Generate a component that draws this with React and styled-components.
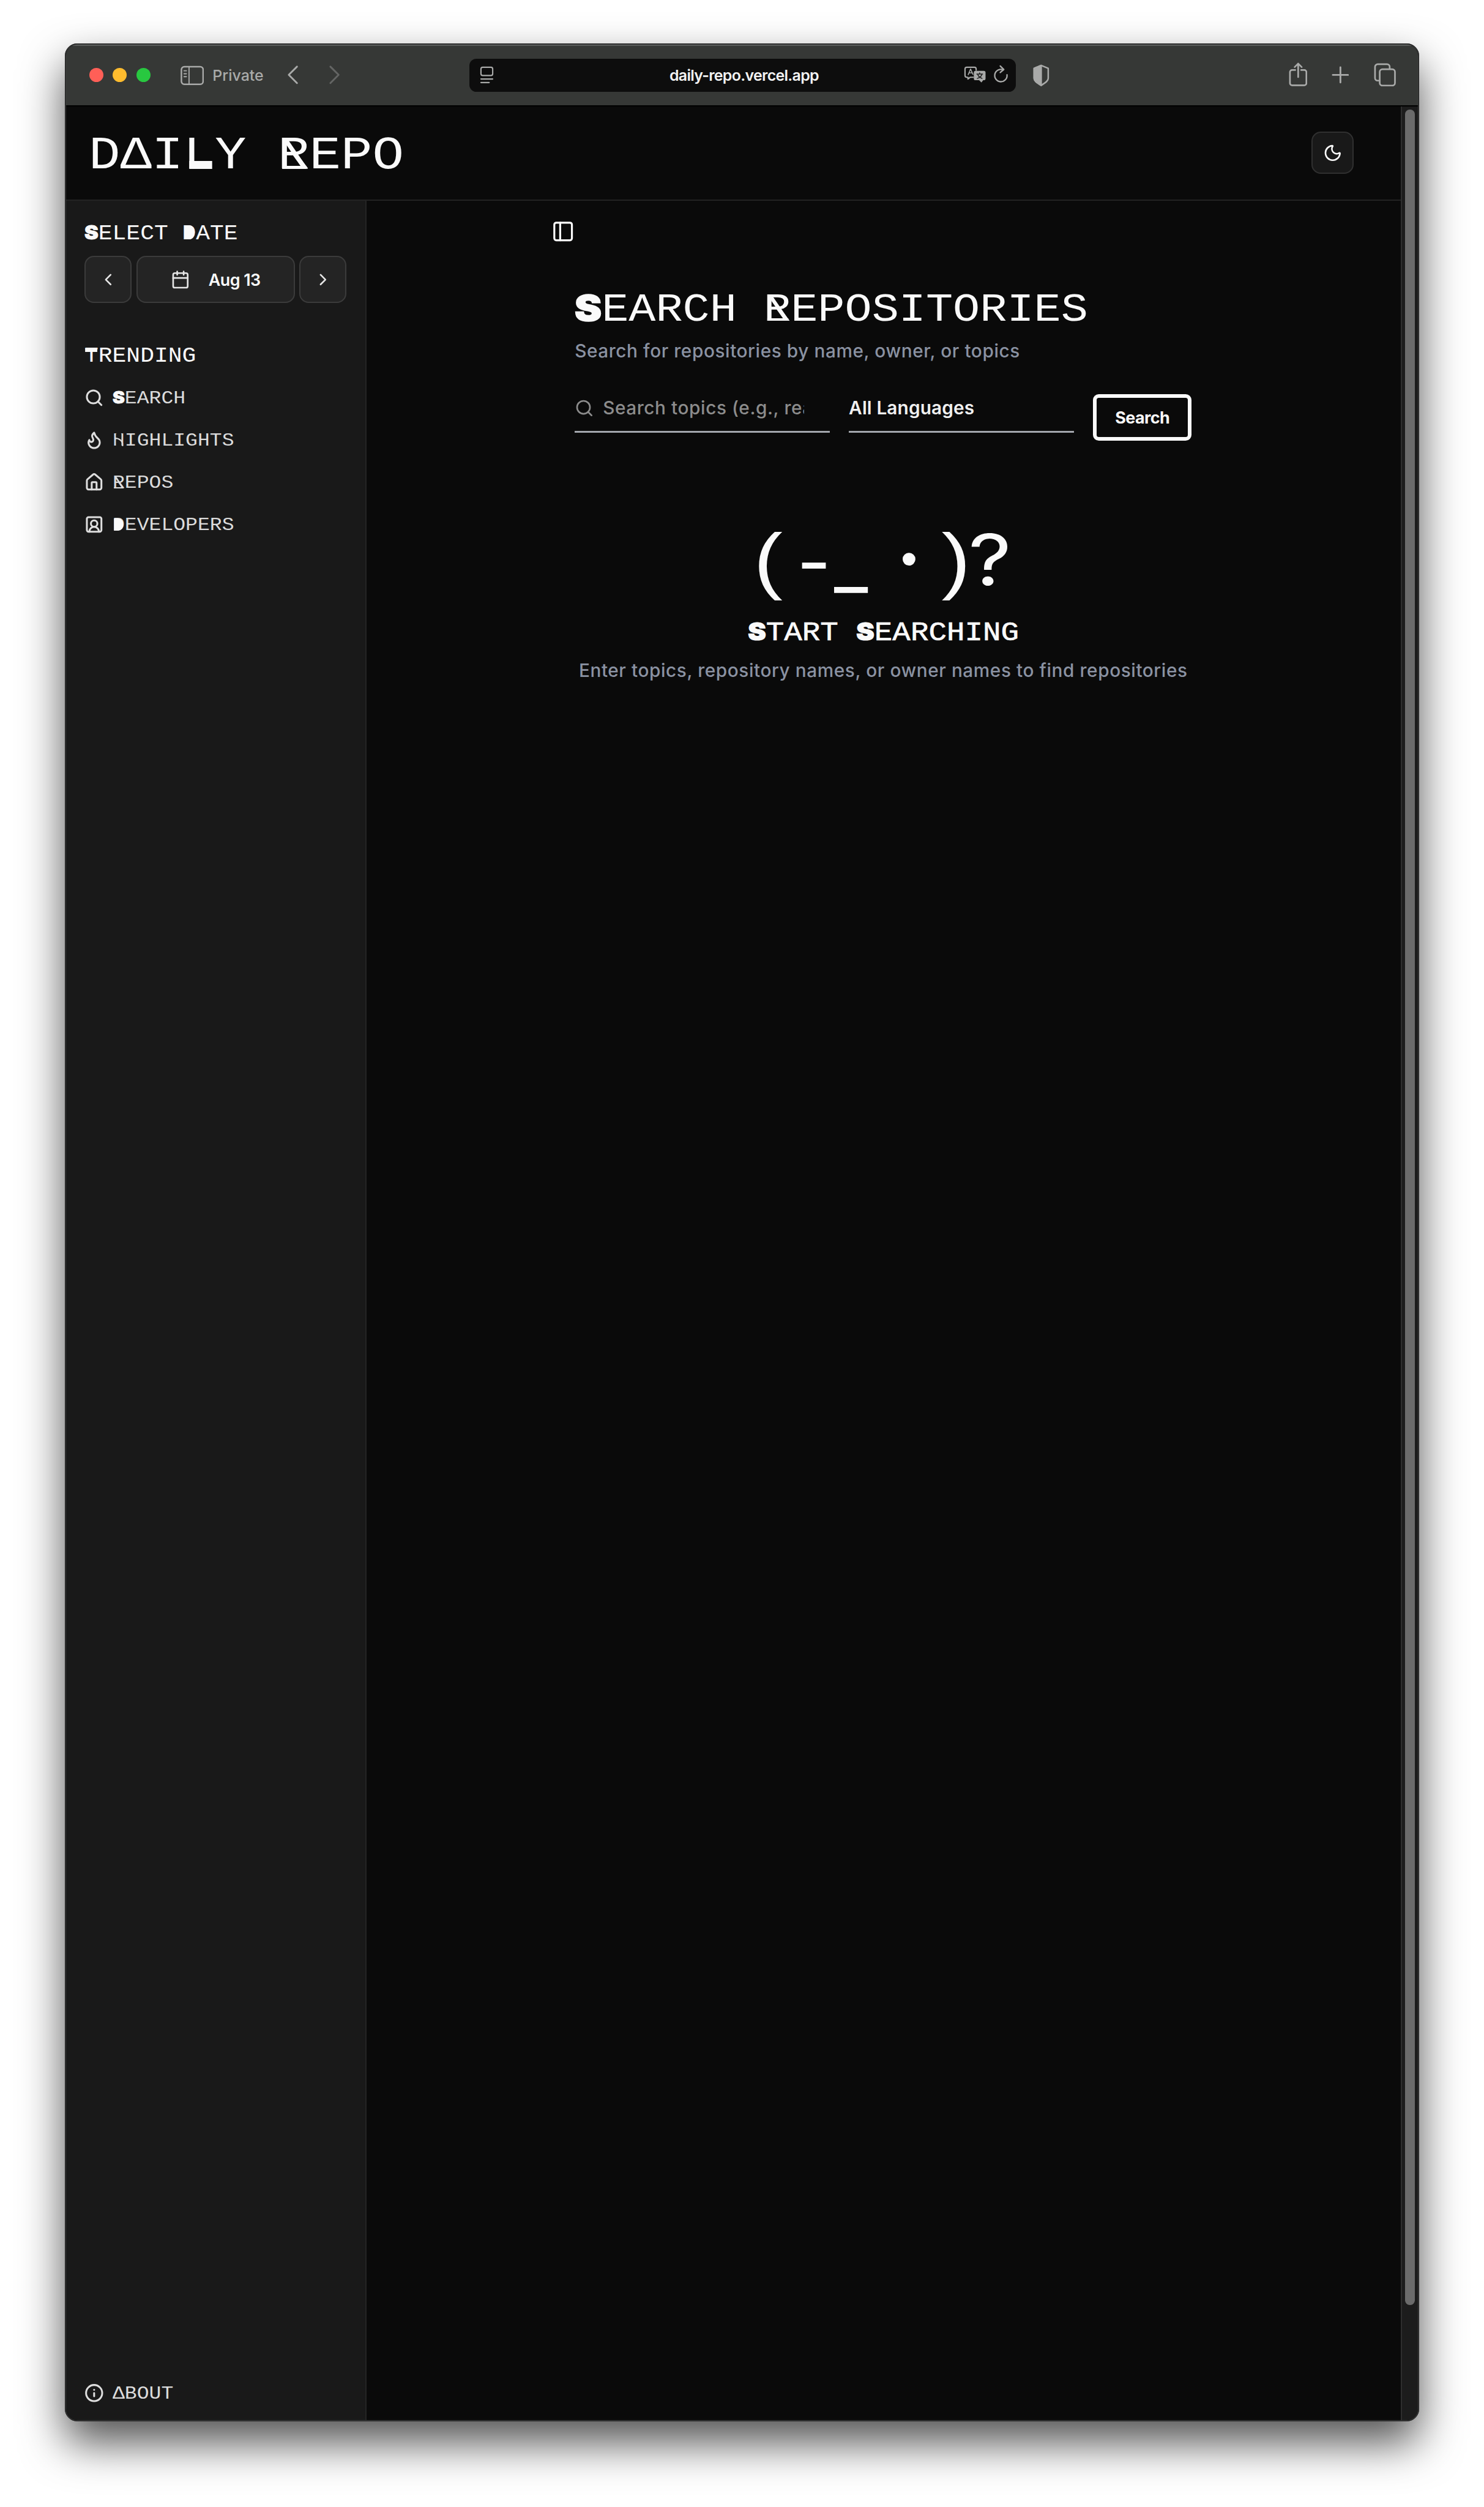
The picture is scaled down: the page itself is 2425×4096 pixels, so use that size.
import React from "react";
import styled, { createGlobalStyle, css } from "styled-components";
import {
  Moon, ChevronLeft, ChevronRight, Calendar, Search, Flame, House,
  SquareUserRound, Info, PanelLeft,
} from "lucide-react";

const SCALE = 0.95926;
const u = (n) => `${(n * SCALE).toFixed(2)}px`;
const sans = `Inter, "Noto Sans", sans-serif`;
const mono = `"Liberation Mono", monospace`;

const GlobalStyle = createGlobalStyle`
  *, *::before, *::after { box-sizing: border-box; }
  html, body { margin: 0; height: 100%; background: #fff; }
  body { font-family: ${sans}; color: #fafafa; overflow: hidden; }
  button, input { font: inherit; color: inherit; }
`;

const Desktop = styled.div`
  height: 100vh;
  padding: ${u(74)} ${u(110)} ${u(146)};
  background: #fff;
  overflow: hidden;
`;

const Window = styled.div`
  display: flex;
  flex-direction: column;
  height: 100%;
  overflow: hidden;
  border: 2px solid #3c3d3d;
  border-radius: ${u(21)};
  background: #0a0a0a;
  outline: 1px solid #1c1c1c;
  outline-offset: -1px;
  box-shadow: 0 ${u(36)} ${u(74)} rgba(0, 0, 0, 0.68);
`;

const Toolbar = styled.div`
  flex: none;
  display: flex;
  align-items: center;
  height: ${u(105)};
  padding-bottom: 1px;
  border-top: 2px solid #5a5c5b;
  border-bottom: 2px solid #000;
  background: #363836;
  color: #a9aaa9;
`;

const ToolbarStart = styled.div`
  display: flex;
  align-items: center;
  width: ${u(688)};
  padding-left: ${u(40)};
`;

const Lights = styled.div`
  display: flex;
  gap: ${u(16)};
`;

const Light = styled.span`
  width: ${u(24)};
  height: ${u(24)};
  border-radius: 50%;
  background: ${(p) => p.$color};
`;

const Glyph = styled.svg`
  flex: none;
  display: block;
  width: ${(p) => u(p.$w)};
  height: ${(p) => u(p.$h)};
  margin-left: ${(p) => u(p.$left || 0)};
  margin-top: ${(p) => u(p.$top || 0)};
  opacity: ${(p) => p.$opacity || 1};
  fill: none;
  stroke: currentColor;
  stroke-width: ${(p) => p.$stroke || 3};
  stroke-linecap: round;
  stroke-linejoin: round;
`;

const PrivateLabel = styled.span`
  width: ${u(90)};
  margin-left: ${u(15)};
  margin-top: ${u(2)};
  font-size: ${u(26)};
  font-weight: 500;
  line-height: 1;
  white-space: nowrap;
`;

const AddressBar = styled.div`
  display: flex;
  align-items: center;
  width: ${u(930)};
  height: ${u(56)};
  padding: 0 ${u(12)} 0 ${u(17)};
  border-radius: ${u(12)};
  background: #0d0d0d;
`;

const Address = styled.span`
  flex: 1;
  padding-left: ${u(52)};
  margin-top: ${u(1)};
  color: #f2f2f2;
  font-size: ${u(26)};
  font-weight: 600;
  letter-spacing: -0.028em;
  line-height: 1.3;
  text-align: center;
`;

const ToolbarEnd = styled.div`
  display: flex;
  align-items: center;
  margin-left: auto;
  padding-right: ${u(38)};
`;

const Viewport = styled.div`
  flex: 1;
  display: flex;
  min-height: 0;
`;

const Site = styled.div`
  flex: 1;
  display: flex;
  flex-direction: column;
  min-width: 0;
`;

const ScrollTrack = styled.div`
  flex: none;
  width: ${u(30)};
  padding: ${u(5)} ${u(6)};
  border-left: 2px solid #2e2e2e;
  background: #1c1c1c;
`;

const ScrollThumb = styled.div`
  width: ${u(16)};
  height: ${u(3740)};
  border-radius: ${u(8)};
  background: #6b6b6b;
`;

const SiteHeader = styled.header`
  flex: none;
  display: flex;
  align-items: center;
  justify-content: space-between;
  height: ${u(161)};
  padding: 0 ${u(80)} ${u(1)} ${u(39)};
  border-bottom: 2px solid #232323;
`;

const ThemeButton = styled.button`
  display: grid;
  place-items: center;
  width: ${u(72)};
  height: ${u(72)};
  padding: 0;
  border: 2px solid #303030;
  border-radius: ${u(16)};
  background: #191919;
  svg { width: ${u(33)}; height: ${u(33)}; }
`;

const Display = styled.div`
  height: ${(p) => u(p.$size)};
  width: max-content;
  margin: ${(p) => u(p.$top || 0)} 0 0;
  color: ${(p) => p.$color || "#fafafa"};
  font-family: ${mono};
  font-size: ${(p) => u(p.$size)};
  font-weight: 400;
  line-height: 1;
  white-space: pre;
  transform: scaleX(${(p) => p.$stretch});
  transform-origin: ${(p) => p.$origin || "left"} center;
  -webkit-text-stroke: ${(p) => p.$weight || 0}em currentColor;
`;

const Cap = styled.span`
  position: relative;
  display: inline-block;
  width: 0.6em;
  line-height: 1;
  &::before, &::after { position: absolute; }
  ${(p) => p.$kind === "D" && css`
    &::after {
      content: "";
      left: 0.08em; top: 0.11em; width: 0.47em; height: 0.655em;
      border-radius: 0 0.24em 0.24em 0 / 0 0.33em 0.33em 0;
      background: #fafafa;
    }
  `}
  ${(p) => p.$kind === "T" && css`
    &::after {
      content: "";
      left: 0.04em; top: 0.11em; width: 0.52em; height: 0.18em;
      background: #fafafa;
    }
  `}
  ${(p) => p.$kind === "L" && css`
    &::after {
      content: "";
      left: 0.115em; bottom: 0.235em; width: 0.44em; height: 0.17em;
      background: currentColor;
    }
  `}
  ${(p) => p.$kind === "R" && css`
    &::before {
      content: "";
      left: 0.08em; bottom: 0.235em; width: 0.46em; height: 0.065em;
      background: currentColor;
    }
    &::after {
      content: "";
      left: 0.08em; top: 0.11em; width: 0.49em; height: 0.655em;
      background: currentColor;
      clip-path: polygon(0 0, 20% 0, 100% 100%, 80% 100%);
    }
  `}
  ${(p) => p.$kind === "H" && css`
    &::before {
      content: "";
      left: 0.165em; top: 0.11em; width: 0.27em; height: 0.66em;
      background: #191919;
    }
    &::after {
      content: "";
      left: 0.1em; top: 0.31em; width: 0.425em; height: 0.455em;
      border-top: 0.08em solid currentColor;
      border-right: 0.08em solid currentColor;
      border-top-right-radius: 0.4em;
    }
  `}
`;

const Heavy = styled.span`
  display: inline-block;
  width: 0.667em;
  font-family: ${sans};
  font-size: 0.9em;
  font-weight: 900;
  line-height: 0;
  text-align: center;
  color: #fafafa;
  -webkit-text-stroke: 0.03em currentColor;
`;

const Columns = styled.div`
  flex: 1;
  display: flex;
  min-height: 0;
`;

const Sidebar = styled.aside`
  flex: none;
  display: flex;
  flex-direction: column;
  width: ${u(512)};
  padding: ${u(38)} ${u(32)} ${u(10)};
  border-right: 2px solid #242424;
  background: #191919;
`;

const DateRow = styled.div`
  display: flex;
  gap: ${u(8)};
  margin: ${u(20)} 0 ${u(73)};
`;

const DateButton = styled.button`
  display: flex;
  align-items: center;
  justify-content: center;
  gap: ${u(32)};
  width: ${(p) => u(p.$wide ? 270 : 80)};
  height: ${u(80)};
  padding: 0;
  border: 2px solid #3b3b3b;
  border-radius: ${u(16)};
  background: #242424;
  font-size: ${u(28)};
  font-weight: 600;
  letter-spacing: -0.02em;
  svg { flex: none; width: ${u(33)}; height: ${u(33)}; color: #e6e6e6; }
`;

const Nav = styled.nav`
  display: flex;
  flex-direction: column;
  margin-top: ${u(16)};
`;

const NavItem = styled.a`
  display: flex;
  align-items: center;
  gap: ${u(15)};
  height: ${u(72)};
  margin-top: ${(p) => (p.$last ? "auto" : 0)};
  svg { flex: none; width: ${u(33)}; height: ${u(33)}; stroke-width: 2.3; color: #dedede; }
`;

const Main = styled.main`
  flex: 1;
  padding: ${u(32)} ${u(355)} 0 ${u(315)};
`;

const PanelToggle = styled.div`
  height: ${u(40)};
  svg { display: block; width: ${u(40)}; height: ${u(40)}; }
`;

const Section = styled.section`
  display: flex;
  flex-direction: column;
  padding-left: ${u(40)};
`;

const Muted = styled.p`
  margin: ${(p) => u(p.$top)} 0 0;
  color: #8a92a2;
  font-size: ${u(31)};
  font-weight: 500;
  letter-spacing: 0.02em;
  line-height: ${u(40)};
  white-space: nowrap;
`;

const SearchRow = styled.div`
  display: flex;
  align-items: flex-start;
  gap: ${u(32)};
  margin-top: ${u(38)};
`;

const Field = styled.div`
  display: flex;
  align-items: center;
  gap: ${u(15)};
  width: ${(p) => u(p.$width)};
  height: ${u(81)};
  padding-right: ${(p) => u(p.$right || 0)};
  border-bottom: 3px solid #a3a6ad;
  color: ${(p) => p.$color};
  font-size: ${u(31)};
  font-weight: ${(p) => p.$bold ? 600 : 500};
  letter-spacing: ${(p) => p.$bold ? "0.005em" : "0.02em"};
  line-height: ${u(40)};
  svg { flex: none; width: ${u(33)}; height: ${u(33)}; }
`;

const FieldText = styled.span`
  flex: 1;
  overflow: hidden;
  white-space: nowrap;
`;

const SearchButton = styled.button`
  width: ${u(168)};
  height: ${u(80)};
  margin-top: ${u(15)};
  padding: 0;
  border: 6px solid #fafafa;
  border-radius: ${u(10)};
  background: transparent;
  font-size: ${u(28)};
  font-weight: 700;
  letter-spacing: -0.02em;
`;

const Empty = styled.div`
  display: flex;
  flex-direction: column;
  align-items: center;
  width: ${u(1051)};
  margin-top: ${u(136)};
`;

const Face = styled.div`
  display: flex;
  align-items: baseline;
  height: ${u(128)};
  font-size: ${u(126)};
  line-height: ${u(128)};
  white-space: pre;
`;

const FacePart = styled.span`
  display: flex;
  justify-content: center;
  width: ${(p) => u(p.$width)};
  margin-left: ${(p) => u(p.$gap || 0)};
  font-family: ${(p) => (p.$round ? sans : `"Liberation Sans", sans-serif`)};
  font-size: ${(p) => u(p.$size || 126)};
  transform: translateY(${(p) => u(p.$lift || 0)}) scaleX(${(p) => p.$stretch || 1});
`;

const Styled = ({ text }) =>
  text.split("").map((ch, i) => {
    if (ch === "*") return null;
    if (text[i - 1] !== "*") return ch;
    return (
      <Cap key={i} $kind={ch}>
        {ch === "S" ? <Heavy>S</Heavy> : ch}
      </Cap>
    );
  });

const navItems = [
  [Search, "*SEARCH"],
  [Flame, "*HIGHLIGHTS"],
  [House, "*REPOS"],
  [SquareUserRound, "*DEVELOPERS"],
];

const NavLabel = ({ text }) => (
  <Display as="span" $size={31.2} $stretch={1.105} $top={5} $color="#dcdcdc">
    <Styled text={text} />
  </Display>
);

const BrowserToolbar = () => (
  <Toolbar>
    <ToolbarStart>
      <Lights>
        <Light $color="#ff5f57" />
        <Light $color="#febc2e" />
        <Light $color="#28c840" />
      </Lights>
      <Glyph $w={40} $h={34} $left={51} viewBox="0 0 40 34" $stroke={2.6}>
        <rect x="1.5" y="2" width="37" height="30" rx="5" />
        <path d="M14.5 2v30M6 9h4M6 14h4M6 19h4" strokeWidth="2" />
      </Glyph>
      <PrivateLabel>Private</PrivateLabel>
      <Glyph $w={20} $h={34} $left={37} $top={-2} viewBox="0 0 20 34">
        <path d="M17 3 3 17l14 14" />
      </Glyph>
      <Glyph $w={20} $h={34} $left={51} $top={-2} $opacity={0.4} viewBox="0 0 20 34">
        <path d="m3 3 14 14L3 31" />
      </Glyph>
    </ToolbarStart>
    <AddressBar>
      <Glyph $w={24} $h={30} viewBox="0 0 24 30" $stroke={2.2}>
        <rect x="2" y="2" width="20" height="14" rx="3" />
        <path d="M2 22h20M2 28h14" />
      </Glyph>
      <Address>daily-repo.vercel.app</Address>
      <Glyph $w={38} $h={30} viewBox="0 0 38 30" $stroke={2.2}>
        <path d="M16 19h-5l-4 3v-3H5a3 3 0 0 1-3-3V5a3 3 0 0 1 3-3h13a3 3 0 0 1 3 3v2" />
        <path d="m7.500 14.500 4-9.500 4 9M9 11.500h5" strokeWidth="1.700" />
        <path d="M20 8h14a3 3 0 0 1 3 3v10a3 3 0 0 1-3 3h-1l-3 4-4-4h-6a3 3 0 0 1-3-3V11a3 3 0 0 1 3-3Z" fill="currentColor" stroke="none" />
        <path d="M22 13.500h10M27 11.500v2M31 13.500c-1 4-4 6-8 7.500M23.500 13.500c1 4 4 6 7.500 7.500" stroke="#222" strokeWidth="1.600" />
      </Glyph>
      <Glyph $w={26} $h={34} $left={12} $top={-3} viewBox="0 0 26 34" $stroke={2.4}>
        <path d="M17 9.500a10.500 10.500 0 1 0 6.500 8.500" />
        <path d="m12 3 6 6-6 5" />
      </Glyph>
    </AddressBar>
    <Glyph $w={30} $h={38} $left={29} viewBox="0 0 30 38" $stroke={2.6}>
      <path d="m15 2 12 5v17c0 5-6 8-12 12C9 32 3 29 3 24V7Z" />
      <path d="M15 2 3 7v17c0 5 6 8 12 12Z" fill="currentColor" />
    </Glyph>
    <ToolbarEnd>
      <Glyph $w={32} $h={42} $top={-4} viewBox="0 0 32 42" $stroke={2.8}>
        <path d="M11 14H5.500A3.500 3.500 0 0 0 2 17.500v19A3.500 3.500 0 0 0 5.500 40h21a3.500 3.500 0 0 0 3.500-3.500v-19a3.500 3.500 0 0 0-3.500-3.500H21" />
        <path d="M16 26V3M10 9l6-6 6 6" />
      </Glyph>
      <Glyph $w={30} $h={30} $left={41} $top={-1} viewBox="0 0 30 30">
        <path d="M15 2v26M2 15h26" />
      </Glyph>
      <Glyph $w={38} $h={40} $left={42} $top={-2} viewBox="0 0 38 40" $stroke={2.8}>
        <path d="M10 30H6.500A4.500 4.500 0 0 1 2 25.500v-19A4.500 4.500 0 0 1 6.500 2h16A4.500 4.500 0 0 1 27 6.500V10" />
        <rect x="10" y="10.500" width="26" height="28" rx="4.500" />
      </Glyph>
    </ToolbarEnd>
  </Toolbar>
);

export default function App() {
  return (
    <Desktop>
      <GlobalStyle />
      <Window>
        <BrowserToolbar />
        <Viewport>
          <Site>
            <SiteHeader>
              <Display as="h1" $top={13} $size={79} $stretch={1.133}>
                DΔI<Cap $kind="L">L</Cap>Y <Cap $kind="R">R</Cap>EPO
              </Display>
              <ThemeButton aria-label="Theme"><Moon /></ThemeButton>
            </SiteHeader>
            <Columns>
              <Sidebar>
                <Display $size={36} $stretch={1.1}><Styled text="*SELECT *DATE" /></Display>
                <DateRow>
                  <DateButton aria-label="Previous"><ChevronLeft /></DateButton>
                  <DateButton $wide><Calendar />Aug 13</DateButton>
                  <DateButton aria-label="Next"><ChevronRight /></DateButton>
                </DateRow>
                <Display $size={36} $stretch={1.1}><Styled text="*TRENDING" /></Display>
                <Nav>
                  {navItems.map(([Icon, text]) => (
                    <NavItem key={text}><Icon /><NavLabel text={text} /></NavItem>
                  ))}
                </Nav>
                <NavItem $last><Info /><NavLabel text="ΔBOUT" /></NavItem>
              </Sidebar>
              <Main>
                <PanelToggle><PanelLeft /></PanelToggle>
                <Section>
                  <Display $size={67} $stretch={1.145} $top={81}>
                    <Styled text="*SEARCH *REPOSITORIES" />
                  </Display>
                  <Muted $top={16}>Search for repositories by name, owner, or topics</Muted>
                  <SearchRow>
                    <Field $width={435} $right={44} $color="#8c8c8c">
                      <Search />
                      <FieldText>Search topics (e.g., rea</FieldText>
                    </Field>
                    <Field $width={384} $bold $color="#f0f0f0"><FieldText>All Languages</FieldText></Field>
                    <SearchButton>Search</SearchButton>
                  </SearchRow>
                  <Empty>
                    <Face>
                      <FacePart $width={40} $stretch={1.18}>(</FacePart>
                      <FacePart $round $width={76} $gap={20} $lift={6}>-</FacePart>
                      <FacePart $round $width={50} $lift={3}>_</FacePart>
                      <FacePart $width={100} $gap={24} $size={80} $lift={-18}>•</FacePart>
                      <FacePart $width={40} $gap={10} $stretch={1.18}>)</FacePart>
                      <FacePart $round $width={68} $gap={4} $size={120} $stretch={1.2}>?</FacePart>
                    </Face>
                    <Display $size={46} $stretch={1.115} $origin="center" $top={40} $weight={0.015}>
                      <Styled text="*START *SEARCHING" />
                    </Display>
                    <Muted $top={21}>Enter topics, repository names, or owner names to find repositories</Muted>
                  </Empty>
                </Section>
              </Main>
            </Columns>
          </Site>
          <ScrollTrack><ScrollThumb /></ScrollTrack>
        </Viewport>
      </Window>
    </Desktop>
  );
}
